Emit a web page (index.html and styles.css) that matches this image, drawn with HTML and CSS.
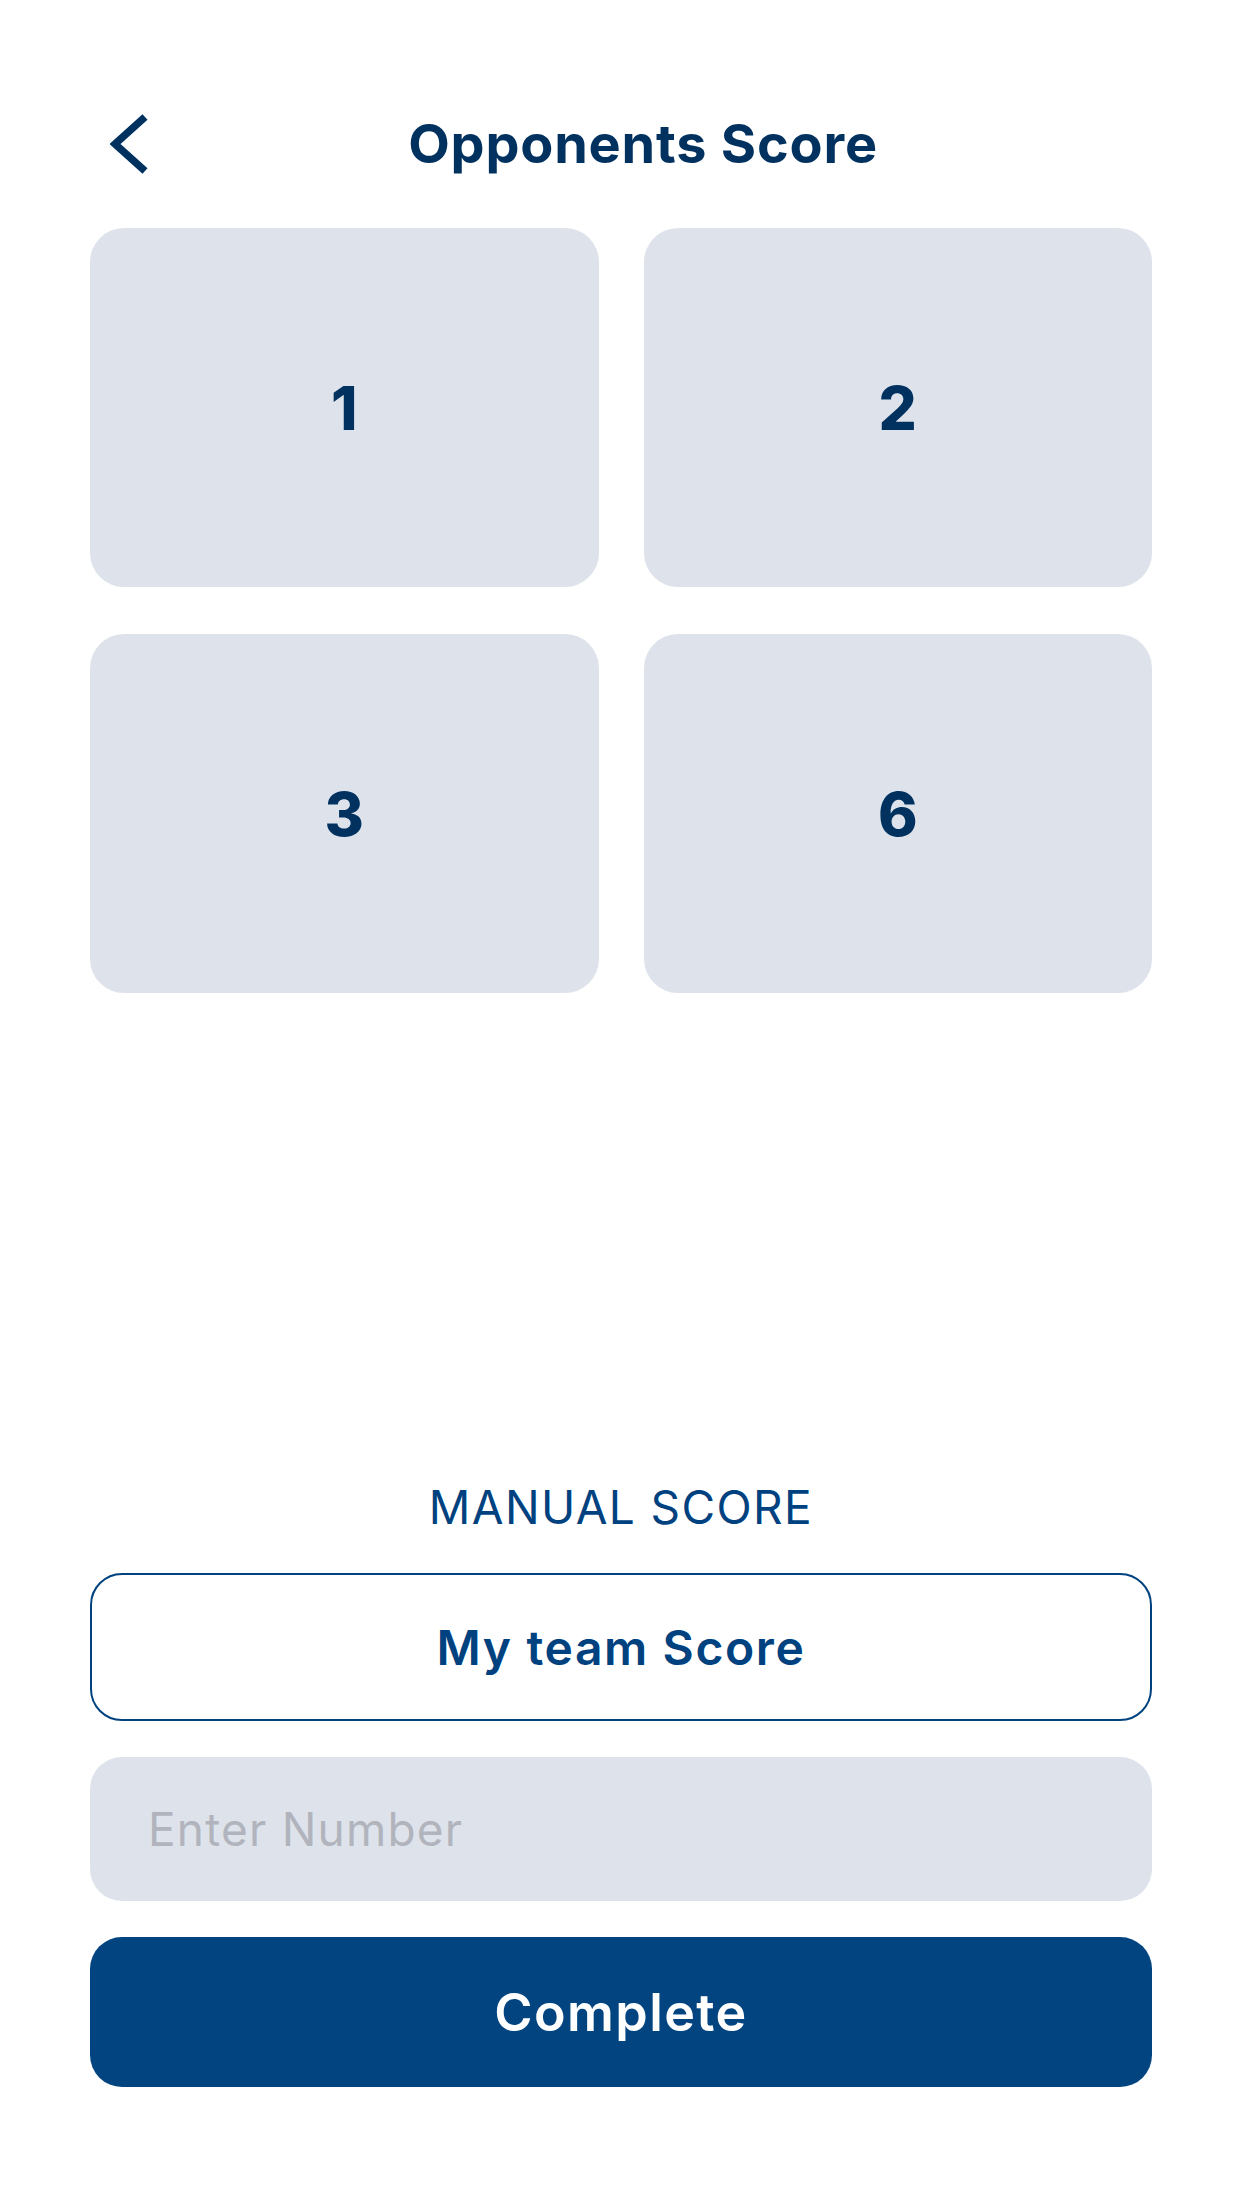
FILE: index.html
```html
<!DOCTYPE html>
<html lang="en">
<head>
<meta charset="utf-8">
<title>Opponents Score</title>
<link rel="stylesheet" href="styles.css">
</head>
<body>
<div class="page">
  <header class="header">
    <button class="back" aria-label="Back">
      <svg width="38" height="62" viewBox="0 0 38 62"><polyline points="35,4 5,31 35,58" fill="none" stroke="#00315f" stroke-width="7.5"/></svg>
    </button>
    <h1 class="title">Opponents Score</h1>
  </header>

  <div class="tiles">
    <button class="tile">1</button>
    <button class="tile">2</button>
    <button class="tile">3</button>
    <button class="tile">6</button>
  </div>

  <section class="manual">
    <div class="manual-label">MANUAL SCORE</div>
    <button class="outline-btn">My team Score</button>
    <input class="number-input" type="text" placeholder="Enter Number">
    <button class="primary-btn">Complete</button>
  </section>
</div>
</body>
</html>
```

FILE: styles.css
```css
* { box-sizing: border-box; }
html, body { margin: 0; padding: 0; background: #ffffff; }
body { font-family: Inter, "Noto Sans", sans-serif; }

.page {
  width: 1242px;
  height: 2208px;
  padding: 0 90px 121px;
  display: flex;
  flex-direction: column;
}

.header {
  display: flex;
  align-items: center;
  height: 70px;
  margin-top: 109px;
}

.back {
  border: 0;
  background: none;
  padding: 0;
  margin-left: 20px;
  width: 38px;
  height: 62px;
  display: flex;
}

.title {
  flex: 1;
  margin: 0;
  padding-right: 14px;
  text-align: center;
  font-size: 54px;
  font-weight: 700;
  color: #00315f;
  line-height: 66px;
  letter-spacing: 0.8px;
}

.tiles {
  margin-top: 49px;
  display: grid;
  grid-template-columns: 1fr 1fr;
  column-gap: 45px;
  row-gap: 47px;
}

.tile {
  height: 359px;
  border: 0;
  border-radius: 34px;
  background: #dee3eb;
  color: #00315f;
  font-family: Inter, "Noto Sans", sans-serif;
  font-size: 60px;
  font-weight: 800;
  display: flex;
  align-items: center;
  justify-content: center;
  padding: 0;
}

.manual {
  margin-top: auto;
  display: flex;
  flex-direction: column;
}

.manual-label {
  text-align: center;
  font-size: 46px;
  line-height: 56px;
  font-weight: 400;
  color: #00427f;
  letter-spacing: 1.4px;
}

.outline-btn {
  margin-top: 38px;
  height: 148px;
  border: 2px solid #00427f;
  border-radius: 32px;
  background: #ffffff;
  color: #00427f;
  font-family: Inter, "Noto Sans", sans-serif;
  font-size: 48px;
  font-weight: 600;
  letter-spacing: 1.6px;
}

.number-input {
  margin-top: 36px;
  height: 144px;
  border: 0;
  border-radius: 32px;
  background: #dee3eb;
  padding: 0 0 0 58px;
  font-family: Inter, "Noto Sans", sans-serif;
  font-size: 46px;
  color: #00315f;
  outline: none;
}

.number-input::placeholder {
  color: #b1b4bc;
  letter-spacing: 1.2px;
}

.primary-btn {
  margin-top: 36px;
  height: 150px;
  border: 0;
  border-radius: 32px;
  background: #01447f;
  color: #ffffff;
  font-family: Inter, "Noto Sans", sans-serif;
  font-size: 52px;
  font-weight: 600;
  letter-spacing: 1.4px;
}
```
